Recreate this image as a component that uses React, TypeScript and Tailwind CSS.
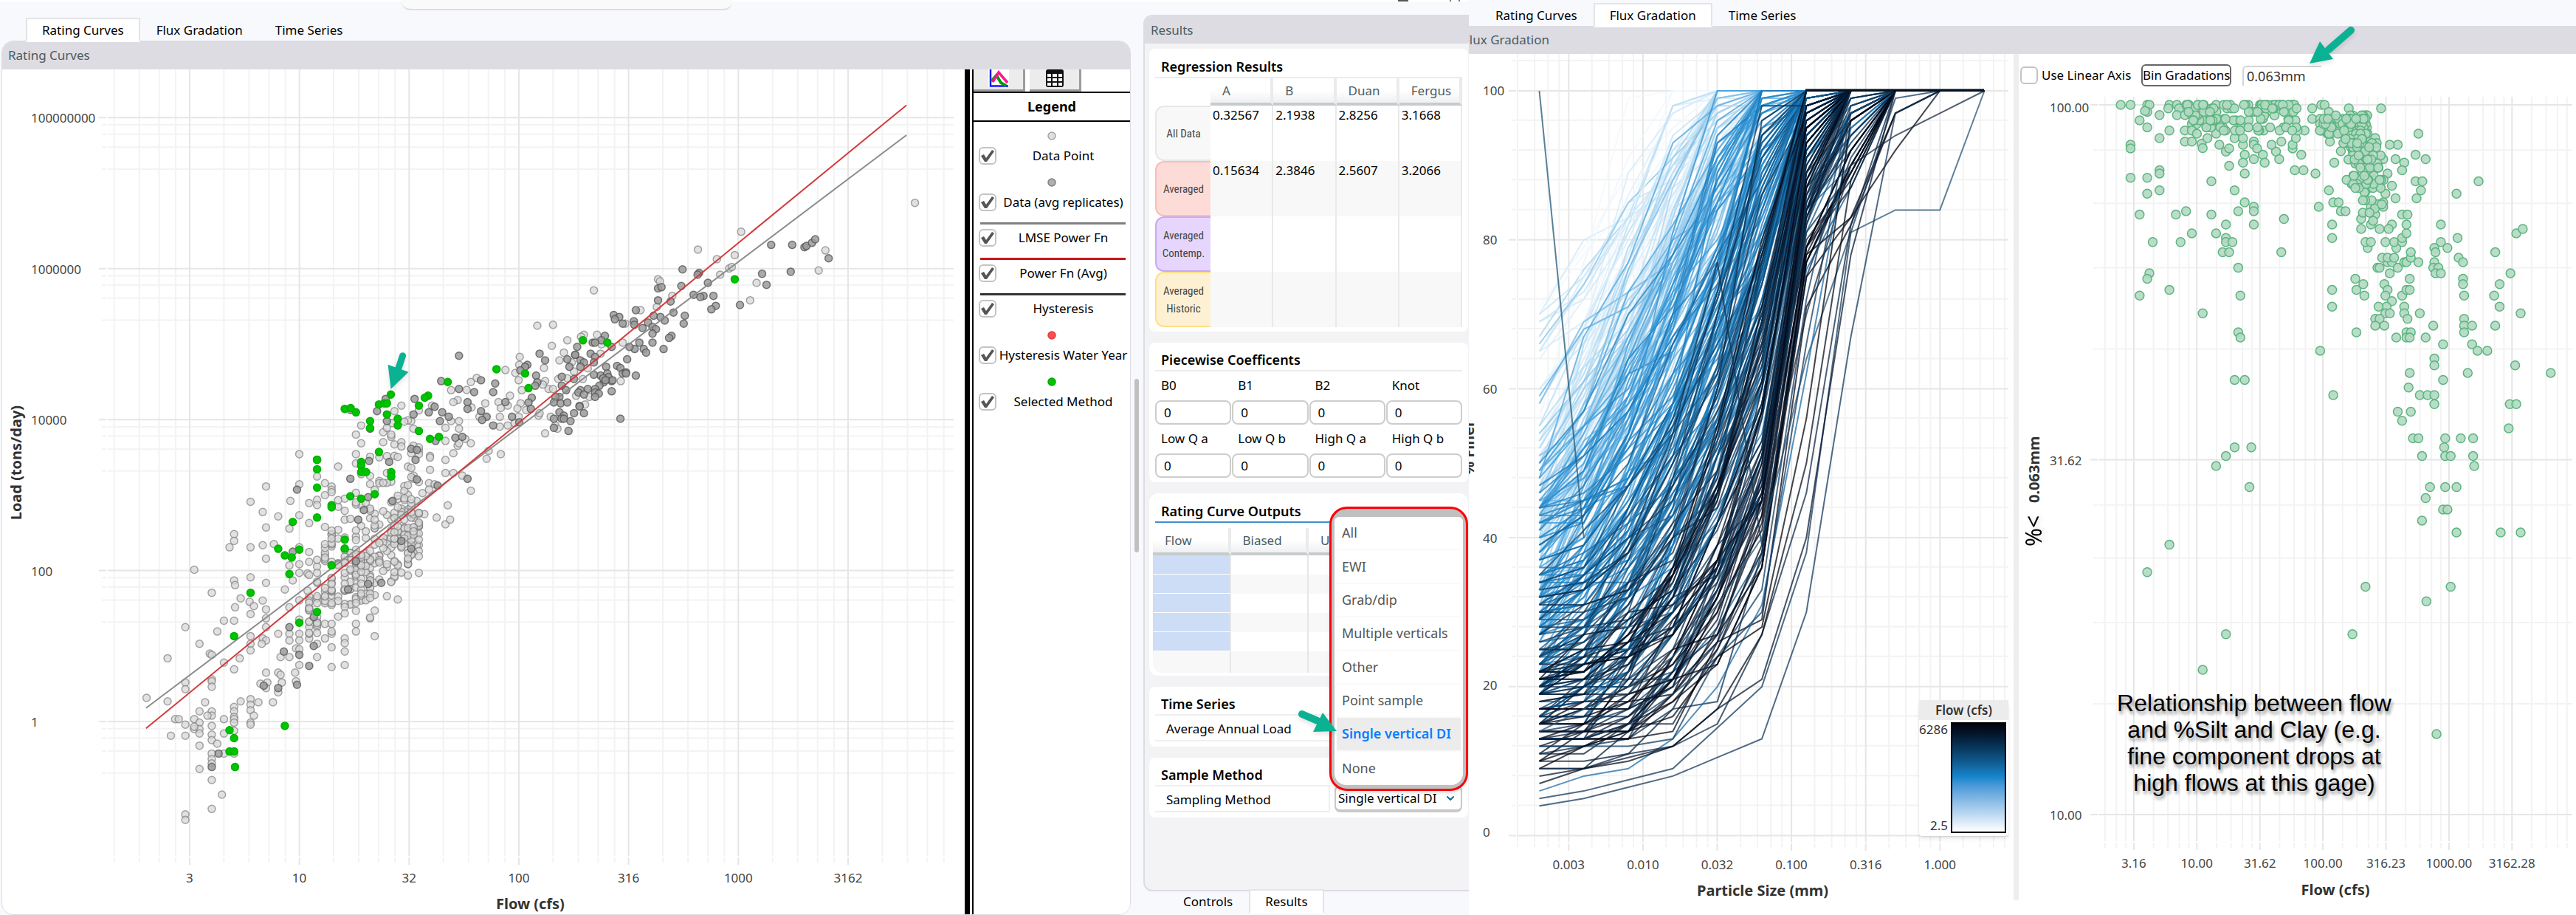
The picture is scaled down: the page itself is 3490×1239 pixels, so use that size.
import { useState } from 'react';
import clsx from 'clsx';
import { ChevronDown } from 'lucide-react';

type Point = { x: number; y: number };

// Digitised points are stored per tile as "x,y" pairs, with the tile's origin and scale.
function readTile(x0: number, y0: number, kx: number, ky: number, raw: string): Point[] {
  return raw
    .trim()
    .split(/\s+/)
    .map((pair) => {
      const [x, y] = pair.split(',').map(Number);
      return { x: x0 + x / kx, y: y0 + y / ky };
    });
}

function makeRandom(seed: number) {
  let s = seed;
  return () => {
    s = (s * 1664525 + 1013904223) % 4294967296;
    return s / 4294967296;
  };
}

const bell = (rnd: () => number) => rnd() + rnd() + rnd() - 1.5;

const loadTop = (raw: string) => readTile(0, 0, 2.24, 2.529, raw);
const loadRight = (raw: string) => readTile(700, 0, 2.529, 2.529, raw);
const loadLow = (raw: string) => readTile(0, 620, 2.24, 2.533, raw);
const siltTop = (raw: string) => readTile(2720, 0, 2.036, 2.529, raw);
const siltLow = (raw: string) => readTile(2720, 620, 2.036, 2.533, raw);

const selectedPoints = [
  ...loadTop(`1508,1265 1360,1309 1187,1352 1300,1356 1290,1363 1272,1390 1047,1401 1065,1398 1081,1413 1151,1386
    1167,1382 1175,1382 1175,1420 1124,1443 1124,1467 1208,1435 1208,1458 1272,1477 1306,1504 1333,1497 1151,1549 963,1575`),
  ...loadRight('228,1166 312,1174 30,1280 42,1330 749,957'),
  ...loadLow(`963,8 963,40 963,103 963,206 1097,15 1097,28 1097,50 1112,50 1188,50 1188,65 1064,133 1097,141 1138,126
    1007,163 1007,171 889,221 845,313 865,336 886,343 909,316 1047,282 1047,312 1007,370 879,400 761,464 963,530 909,567
    711,613 865,921 697,936 711,963 697,1009 711,1009 714,1062`),
];

const averagedPoints = [
  ...loadTop(`1394,1219 1340,1306 1461,1303 1504,1314 1394,1333 1440,1344 1498,1344 1420,1378 1420,1401 1535,1378
    1461,1409 1478,1428 1464,1439 1498,1458 1555,1428 1320,1394 1302,1413 1343,1413 1363,1428 1336,1443 1259,1367
    1256,1420 1171,1367 1145,1409 1175,1443 1065,1405 1124,1469 1323,1511 1383,1500 1404,1497 1249,1538 1266,1542`),
  ...loadRight(`874,839 946,839 988,847 995,843 1014,832 1025,820 1071,885 941,931 843,938 858,976 767,1045 684,1048
    669,1060 676,1014 642,1014 631,1018 608,1010 657,969 627,935 622,941 570,923 566,980 486,988 498,984 486,1029
    529,1033 539,1071 578,1082 574,1109 509,1098 494,1086 471,1082 452,1105 467,1120 479,1128 467,1143 433,1124
    403,1101 405,1113 410,1063 334,1079 353,1086 338,1094 365,1109 532,1151 524,1158 505,1196 467,1174 422,1174
    406,1196 437,1196 445,1208 388,1189 327,1189 304,1151 292,1166 262,1174 270,1174 209,1189 202,1216 255,1212
    270,1223 175,1231 220,1235 232,1242 220,1257 182,1257 266,1242 380,1231 346,1254 357,1261 365,1280 376,1276
    410,1287 308,1257 289,1287 312,1280 316,1292 327,1306 327,1341 266,1284 300,1310 285,1322 270,1333 270,1345
    283,1349 270,1360 245,1333 220,1337 213,1345 232,1352 198,1299 156,1291 156,1322 171,1337 148,1360 134,1360
    129,1379 152,1382 175,1379 217,1391 232,1416 198,1416 148,1413 163,1424 155,1435 163,1435 129,1435 186,1443
    129,1466 179,1477 357,1435 80,1212 99,1235 38,1250 30,1257 14,1269 68,1287 72,1310 65,1322 53,1363 42,1379
    50,1401 10,1447 376,1280 330,1303 298,1296 306,1303 217,1393 202,1216`),
  ...loadLow(`1121,12 1182,15 1262,8 1064,73 1266,75 1420,73 1329,96 902,110 1118,136 1192,149 1105,180 1088,213
    889,323 1081,356 1219,286 1249,313 1057,453 1118,434 1158,430 879,582 953,548 953,647 862,666 909,677 939,715
    801,783 845,791 902,780 664,1016 643,1062`),
];

function denseLoad(): Point[] {
  const rnd = makeRandom(41);
  const columns = [
    939, 963, 987, 1007, 1007, 1027, 1047, 1064, 1081, 1081, 1097, 1097, 1111, 1124, 1124, 1138, 1152, 1164, 1175, 1188,
    1198, 1208, 1219, 1228, 1239, 1249, 1256, 1272,
  ];
  const pairs: string[] = [];
  for (let i = 0; i < 235; i++) {
    const x = columns[Math.floor(rnd() * columns.length)];
    const y = 560 - (x - 909) * 0.92 + bell(rnd) * 150;
    pairs.push(`${x},${Math.round(y)}`);
  }
  for (let i = 0; i < 70; i++) {
    const x = columns[Math.floor(rnd() * columns.length)];
    pairs.push(`${x},${Math.round(300 - (x - 909) * 0.7 + bell(rnd) * 170)}`);
  }
  return loadLow(pairs.join(' '));
}

const dataPoints = [
  ...loadTop(`1535,1268 1565,1278 1448,1295 1430,1309 1370,1337 1417,1336 1390,1371 1377,1378 1474,1382 1549,1356
    1514,1378 1521,1398 1542,1390 1432,1396 1312,1390 1272,1406 1219,1390 1198,1409 1191,1450 1249,1443 1097,1458
    1081,1489 1097,1519 1164,1481 1175,1466 1164,1515 1198,1523 1219,1515 1219,1530 1256,1469 1394,1443 1370,1443
    1394,1469 1353,1466 1353,1511 1390,1527 1394,1519 1413,1504 1430,1519 1377,1553 1518,1428 1518,1462 1542,1458
    1456,1428 1563,1450 1521,1556 1484,1545 909,1556 1081,1556 1124,1565 1198,1562 1208,1566 1306,1562`),
  ...loadRight(`771,794 623,855 749,874 688,888 730,920 739,915 699,941 1060,858 1037,927 824,969 802,1029 1367,695
    486,957 493,964 535,1014 482,1052 426,1063 266,995 72,1116 126,1113 232,1147 222,1154 277,1147 175,1166 122,1185
    163,1208 12,1223 148,1235 289,1212 292,1180 365,1174 374,1109 10,1250 95,1261 8,1303 19,1337 99,1306 91,1318
    111,1333 126,1333 190,1242 198,1273 175,1296 228,1299 144,1299 245,1262 358,1306 15,1382 34,1405 8,1428 76,1424
    80,1416 118,1428 236,1386 205,1356 251,1360 134,1458 141,1469 99,1485 4,1400`),
  ...loadLow(`1306,0 1353,8 1478,4 1306,42 1353,53 1377,53 1404,62 1430,114 1239,31 1256,62 1256,73 1303,88 1320,92
    1283,122 1303,110 1266,149 1272,190 1289,194 1326,206 1353,229 1367,213 1360,164 1272,237 1266,263 1256,240
    1272,301 1266,301 1239,251 1228,240 1239,366 1208,366 1208,487 1175,476 1188,426 1198,411 1138,613 1047,621
    1047,666 1047,712 1007,719 1124,552 1138,525 1027,31 963,65 909,92 808,99 761,152 798,187 845,202 882,149 939,156
    963,145 987,129 987,88 1007,99 909,198 939,225 879,244 808,240 711,263 711,286 697,308 761,308 798,301 832,297
    808,347 590,385 711,422 714,438 761,411 808,430 865,453 889,422 643,464 731,483 758,495 798,491 771,510 714,514
    808,521 761,537 808,552 711,560 680,560 563,582 660,597 808,582 606,639 761,613 761,639 761,662 798,621 808,628
    795,639 845,605 879,605 879,628 879,685 852,685 909,605 909,628 909,712 899,655 909,658 963,685 963,639 987,621
    939,621 939,605 963,582 939,582 987,571 1007,571 1007,605 1081,571 1081,597 509,689 637,673 643,677 680,704
    711,727 728,689 808,738 845,738 852,746 896,738 899,768 856,772 812,772 791,776 808,791 845,806 563,772 563,795
    643,761 643,768 643,787 445,825 509,837 623,840 731,837 761,829 761,848 761,867 785,840 829,840 771,886 761,910
    761,917 711,856 711,871 711,890 711,898 711,910 680,898 643,871 643,886 630,886 606,871 590,898 606,910 532,898
    543,898 563,917 590,932 606,932 606,947 643,921 643,951 643,970 590,924 519,955 563,955 606,989 660,982 680,947
    711,938 680,1016 711,1016 643,1016 643,1035 643,1050 606,1069 643,1107 674,1157 643,1206 563,1225 563,1244
    879,370 909,366 939,358 963,374 909,396 934,398 939,324 987,335 987,355 1007,263 1027,248 1047,213 1047,183
    909,490 879,514 963,483 939,525 909,556 1007,305 909,308 939,403 963,396 963,430 939,477 934,457`),
  ...denseLoad(),
];

function denseSilt(): Point[] {
  const rnd = makeRandom(97);
  const pairs: string[] = [];
  // crowded band close to 100 %
  for (let i = 0; i < 110; i++) {
    const x = 490 + rnd() * 310;
    pairs.push(`${Math.round(x)},${[359, 359, 371, 383, 383, 395, 407, 412, 436, 447][Math.floor(rnd() * 10)]}`);
  }
  for (let i = 0; i < 75; i++) {
    const x = 860 + rnd() * 135;
    pairs.push(`${Math.round(x)},${[395, 407, 407, 424, 424, 436, 447, 458][Math.floor(rnd() * 8)]}`);
  }
  // drop between 200 and 400 cfs
  for (let i = 0; i < 120; i++) {
    const y = 480 + rnd() * rnd() * 340;
    const x = 965 + (y - 480) * 0.17 + bell(rnd) * 48;
    pairs.push(`${Math.round(x)},${Math.round(y / 14) * 14}`);
  }
  return siltTop(pairs.join(' '));
}

const siltPoints = [
  ...siltTop(`312,359 339,359 385,359 391,359 385,383 379,380 364,412 385,436 419,394 419,473 446,447 446,359 443,371
    467,359 473,371 467,394 489,394 508,394 508,424 522,424 489,447 508,447 522,458 489,485 508,485 535,492 538,507
    551,473 575,458 584,496 602,519 611,508 649,496 626,473 649,473 679,485 679,496 688,508 654,530 679,545 704,530
    709,557 649,557 611,568 654,594 740,519 749,545 755,485 728,496 786,508 786,496 795,473 810,530 792,583 816,583
    849,594 819,447 840,407 840,371 865,359 874,359 886,383 889,485 901,557 941,371 1030,371 1014,473 1133,458 1125,530
    1153,545 1076,496 1054,496 1070,545 1094,557 1125,621 1144,621 1140,652 1128,679 1299,621 1238,663 339,496 339,508
    419,583 419,594 385,609 339,609 419,652 385,663 562,621 626,652 654,693 679,708 679,723 636,723 562,735 492,723
    464,735 364,735 602,769 679,769 762,750 886,652 898,693 913,693 858,708 919,723 932,723 895,769 895,815 508,799
    575,799 602,815 602,829 620,829 593,864 611,864 400,829 477,829 755,864 636,917 391,936 385,955 446,993 364,1012
    642,1012 538,1073 636,1138 642,1156 862,1201 626,1301 654,1301 898,1353 626,1532 672,1532 602,1562 895,993 895,1050
    959,955 981,973 962,993 984,1012 962,1138 1054,936 1039,973 1048,993 1042,1012 1060,1031 1045,1050 1023,1050
    1042,1073 1054,1073 1014,1092 1026,1092 1039,1115 1014,1115 1088,1012 1100,993 1109,993 1109,955 1094,1050
    1094,1073 1103,1092 1137,1073 1100,1138 1112,1138 1072,1156 1100,1156 1109,1156 1153,1156 1174,1115 1020,917
    1026,917 1048,898 1060,898 1076,917 1033,883 1048,883 1066,883 1094,898 1100,898 1112,883 1112,864 1133,898
    1072,849 1066,829 1088,829 1088,815 1100,799 1100,769 1088,735 1103,735 1177,849 1195,829 1180,864 1213,849
    1177,898 1174,917 1188,917 1180,936 1195,936 1195,769 1241,815 1244,883 1256,898 1256,955 1256,973 1259,1012
    1259,1092 1259,1115 1259,1138 1281,1115 1281,1179 1296,1201 1323,1201 1201,1179 1177,1228 1177,1251 1109,1277
    1106,1327 1201,1301 1269,1277 1137,1353 1158,1353 1177,1353 1177,1384 1076,1410 1112,1410 1088,1441 1118,1501
    1133,1501 1207,1501 1250,1501 1284,1501 1204,1532 1143,1562 1207,1562 1222,1562 1284,1562 1345,864 1403,799
    1421,784 1387,936 1357,973 1342,1012 1357,1050 1415,1073 1345,1115 1400,1251 1498,1277 1385,1384 1403,1384 1382,1467
    993,849 987,829 1002,829 1002,769 975,784 975,750 1002,708 1036,693 1036,708 1014,735 1042,829 1060,769 1042,663
    1070,679 1060,636 1023,636 1088,583 1048,594 1036,545`),
  ...siltLow(`575,28 1287,28 667,100 1165,100 1207,100 1238,100 1153,138 1201,177 1213,177 1143,215 1238,256 1360,256
    1415,256 446,298 385,392 987,442 1222,442 1155,492 602,605 951,605 538,727 1183,947`),
  ...denseSilt(),
];

const rampStops: [number, number[]][] = [
  [0, [240, 248, 253]],
  [0.25, [160, 208, 238]],
  [0.45, [50, 150, 215]],
  [0.62, [22, 116, 180]],
  [0.78, [12, 66, 108]],
  [0.9, [8, 30, 56]],
  [1, [3, 6, 20]],
];

function ramp(t: number) {
  const v = Math.min(1, Math.max(0, t));
  let i = 1;
  while (i < rampStops.length - 1 && v > rampStops[i][0]) i++;
  const [a, ca] = rampStops[i - 1];
  const [b, cb] = rampStops[i];
  const f = (v - a) / (b - a);
  return `rgb(${ca.map((c, n) => Math.round(c + (cb[n] - c) * f)).join(',')})`;
}

const sizeX = (k: number) => 2085.5 + k * 60.3;
const finerY = (p: number) => 1131.6 - p * 10.086;

function curvePath(values: number[]) {
  return values.map((p, k) => `${k ? 'L' : 'M'}${sizeX(k).toFixed(1)} ${finerY(p).toFixed(1)}`).join('');
}

function buildCurves() {
  const rnd = makeRandom(7);
  const curves: { d: string; color: string }[] = [];
  const total = 330;
  for (let i = 0; i < total; i++) {
    const t = i / total;
    const start = (14 + 44 * Math.pow(1 - t, 1.1)) * (0.6 + rnd() * 0.75);
    const reach = 3.8 + 3.5 * t + bell(rnd) * 1.4;
    const power = 0.7 + 2 * t * t + rnd() * 0.6;
    const values: number[] = [];
    for (let k = 0; k <= 10; k++) {
      let p = start + (100 - start) * Math.pow(k / reach, power);
      if (k && k < reach) p += bell(rnd) * 4;
      // sand sizes close in on 100 % much faster than silt sizes
      if (k > 5 && k < reach) p = 100 - (100 - p) * 0.5;
      if (k >= reach) p = k < 7 && rnd() < 0.25 ? 97 + Math.floor(rnd() * 3) : 100;
      values.push(Math.min(100, Math.round(Math.max(p, values[k - 1] ?? 0))));
    }
    curves.push({ d: curvePath(values), color: ramp(t + bell(rnd) * 0.16) });
  }
  return curves;
}

const curves = [
  ...buildCurves(),
  { d: curvePath([100, 40]), color: '#225577' },
  { d: curvePath([24, 30, 39, 54, 77, 39, 85, 100, 100, 100, 100]), color: '#123450' },
  { d: curvePath([14, 17, 20, 24, 31, 40, 64, 81, 84, 84, 100]), color: '#2a5676' },
  { d: curvePath([16, 18, 19, 25, 33, 44, 70, 90, 94, 97, 100]), color: '#1a2a40' },
  { d: curvePath([4, 5, 6.5, 8, 10.5, 13, 30, 67, 97, 100, 100]), color: '#173a5c' },
  { d: curvePath([5, 6, 7.5, 9, 14.5, 20, 38, 81, 99, 100, 100]), color: '#173a5c' },
  { d: curvePath([6, 8, 9, 13, 20, 31, 62, 95, 100, 100, 100]), color: '#1c6ca8' },
  { d: curvePath([8, 9, 10.5, 12, 17, 21, 40, 78, 100, 100, 100]), color: '#0a1a33' },
  { d: curvePath([9, 9, 11, 12, 15, 27, 46, 82, 100, 100, 100]), color: '#102a48' },
  { d: curvePath([7, 9, 10, 12, 17, 27, 50, 88, 100, 100, 100]), color: '#06101f' },
  { d: curvePath([12, 12, 12, 13, 24, 33, 72, 98, 100, 100, 100]), color: '#143c60' },
  { d: curvePath([13, 13, 15, 19, 24, 30, 66, 97, 100, 100, 100]), color: '#143c60' },
  { d: curvePath([10, 12, 14, 16, 24, 28, 56, 96, 100, 100, 100]), color: '#05070f' },
];

// Five linear divisions between two majors, seen on a log axis.
const logSteps = (ratio: number) => [1, 2, 3, 4].map((k) => Math.log(1 + ((ratio - 1) * k) / 5) / Math.log(ratio));
const halfDecade = logSteps(Math.sqrt(10));
const twoDecades = logSteps(100);

function series(first: number, step: number, count: number) {
  return Array.from({ length: count }, (_, i) => first + step * i);
}

function minors(majors: number[], step: number, fractions: number[], low: number, high: number) {
  const all = [majors[0] - step, ...majors].flatMap((m) => fractions.map((f) => m + step * f));
  return all.filter((v) => v >= Math.min(low, high) && v <= Math.max(low, high));
}

type GridProps = {
  left: number;
  right: number;
  top: number;
  bottom: number;
  xMajor: number[];
  xMinor: number[];
  yMajor: number[];
  yMinor: number[];
};

function Grid({ left, right, top, bottom, xMajor, xMinor, yMajor, yMinor }: GridProps) {
  const vertical = (x: number, tick: number) => `M${x} ${top}V${bottom}M${x} ${bottom + 2}v${tick}`;
  const horizontal = (y: number, tick: number) => `M${left} ${y}H${right}M${left - 2} ${y}h${-tick}`;
  return (
    <g fill="none" strokeWidth="2">
      <path stroke="#f3f3f3" d={[...xMinor.map((x) => vertical(x, 7)), ...yMinor.map((y) => horizontal(y, 6))].join('')} />
      <path stroke="#e6e6e6" d={[...xMajor.map((x) => vertical(x, 10)), ...yMajor.map((y) => horizontal(y, 10))].join('')} />
    </g>
  );
}

function Dots({ points, r, fill, stroke }: { points: Point[]; r: number; fill: string; stroke: string }) {
  return (
    <g fill={fill} stroke={stroke} strokeWidth="1.5">
      {points.map((p, i) => (
        <circle key={i} cx={p.x.toFixed(1)} cy={p.y.toFixed(1)} r={r} />
      ))}
    </g>
  );
}

const tick = 'fill-[#444] text-[17px]';
const axisTitle = 'fill-[#333] text-[20px] font-bold';

function LoadChart() {
  const xMajor = series(257.1, 148.8, 7);
  const yMajor = series(159.3, 204.6, 5);
  const yLabels = ['100000000', '1000000', '10000', '100', '1'];
  const xLabels = ['3', '10', '32', '100', '316', '1000', '3162'];
  const xMinor = minors(xMajor, 148.8, halfDecade, 147, 1290);
  const yMinor = [...yMajor, 1182.3].slice(1).flatMap((m) => twoDecades.map((f) => m - 204.6 * f)).filter((y) => y < 1060);
  return (
    <svg viewBox="3 94 1305 1145" className="block h-auto min-w-0 flex-1" role="img" aria-label="Load against flow">
      <Grid left={146} right={1293} top={94} bottom={1160} xMajor={xMajor} xMinor={xMinor} yMajor={yMajor} yMinor={yMinor} />
      <Dots points={dataPoints} r={5} fill="rgba(215,215,215,0.75)" stroke="rgba(120,120,120,0.65)" />
      <Dots points={averagedPoints} r={5} fill="rgba(155,155,155,0.85)" stroke="rgba(80,80,80,0.75)" />
      <g strokeWidth="2">
        <path d="M198 959.5L1229 183" stroke="#8c8c8c" />
        <path d="M198 987L1229 142.5" stroke="#d3393b" />
      </g>
      <Dots points={selectedPoints} r={5} fill="#00c400" stroke="#00b000" />
      {yLabels.map((label, i) => (
        <text key={label} x={42} y={yMajor[i] + 7} className={tick}>
          {label}
        </text>
      ))}
      {xLabels.map((label, i) => (
        <text key={label} x={xMajor[i]} y={1196} textAnchor="middle" className={tick}>
          {label}
        </text>
      ))}
      <text x={719} y={1232} textAnchor="middle" className={axisTitle}>
        Flow (cfs)
      </text>
      <text transform="translate(29 627) rotate(-90)" textAnchor="middle" className={axisTitle}>
        Load (tons/day)
      </text>
      <g fill="#0bb193" stroke="#0bb193" className="drop-shadow-md">
        <path d="M546 482L539 503" strokeWidth="9" strokeLinecap="round" />
        <path d="M526 494L554 504L530 527Z" stroke="none" />
      </g>
    </svg>
  );
}

function GradationChart() {
  const xMajor = series(2125.3, 100.6, 6);
  const yMajor = series(123, 201.7, 6);
  const yMinor = series(82, 40.34, 26).filter((_, i) => i % 5 !== 1);
  const xLabels = ['0.003', '0.010', '0.032', '0.100', '0.316', '1.000'];
  return (
    <svg viewBox="1990 73 738 1146" className="block h-auto w-full" role="img" aria-label="Percent finer by particle size">
      <Grid
        left={2056}
        right={2721}
        top={73}
        bottom={1140}
        xMajor={xMajor}
        xMinor={minors(xMajor, 100.6, halfDecade, 2056, 2720)}
        yMajor={yMajor}
        yMinor={yMinor}
      />
      <g fill="none" strokeWidth="2" strokeOpacity="0.75">
        {curves.map((c, i) => (
          <path key={i} d={c.d} stroke={c.color} />
        ))}
      </g>
      <path d="M2446 122H2688" stroke="#04101f" strokeWidth="3" />
      {['100', '80', '60', '40', '20', '0'].map((label, i) => (
        <text key={label} x={2009} y={[129, 331, 533, 735, 934, 1133][i]} className={tick}>
          {label}
        </text>
      ))}
      {xLabels.map((label, i) => (
        <text key={label} x={xMajor[i]} y={1177} textAnchor="middle" className={tick}>
          {label}
        </text>
      ))}
      <text x={2388} y={1213} textAnchor="middle" className={axisTitle}>
        Particle Size (mm)
      </text>
      <text transform="translate(1997 606) rotate(-90)" textAnchor="middle" className={axisTitle}>
        % Finer
      </text>
    </svg>
  );
}

function SiltChart() {
  const xMajor = series(2890.9, 85.4, 7);
  const yMajor = series(142, 480.5, 3);
  const yMinor = yMajor.slice(1).flatMap((m) => halfDecade.map((f) => m - 480.5 * f));
  const xLabels = ['3.16', '10.00', '31.62', '100.00', '316.23', '1000.00', '3162.28'];
  return (
    <svg viewBox="2735 131 755 1108" className="block h-auto w-full" role="img" aria-label="Percent silt and clay by flow">
      <Grid
        left={2844}
        right={3485}
        top={131}
        bottom={1139}
        xMajor={xMajor}
        xMinor={minors(xMajor, 85.4, halfDecade, 2846, 3482)}
        yMajor={yMajor}
        yMinor={yMinor}
      />
      <Dots points={siltPoints} r={6} fill="rgba(178,217,194,0.9)" stroke="#5db481" />
      {['100.00', '31.62', '10.00'].map((label, i) => (
        <text key={label} x={2777} y={[152, 630, 1110][i]} className={tick}>
          {label}
        </text>
      ))}
      {xLabels.map((label, i) => (
        <text key={label} x={xMajor[i]} y={1175} textAnchor="middle" className={tick}>
          {label}
        </text>
      ))}
      <text x={3164} y={1212} textAnchor="middle" className={axisTitle}>
        Flow (cfs)
      </text>
      <text transform="translate(2763 681) rotate(-90)" className={axisTitle}>
        0.063mm
      </text>
      <text transform="translate(2766 740) rotate(-90)" className="fill-black text-[30px] drop-shadow-md">
        %&lt;
      </text>
    </svg>
  );
}

function Tabs({ items, active, className }: { items: string[]; active: string; className?: string }) {
  return (
    <div role="tablist" className={clsx('flex text-[17px] text-black', className)}>
      {items.map((item) => (
        <button
          key={item}
          type="button"
          role="tab"
          aria-selected={item === active}
          className={clsx('border-2 px-5', item === active ? 'border-[#e3e4e8] border-b-white bg-white' : 'border-transparent')}
        >
          {item}
        </button>
      ))}
    </div>
  );
}

function CheckBox({ id, defaultChecked }: { id: string; defaultChecked?: boolean }) {
  return (
    <span className="relative block size-6 shrink-0">
      <input
        id={id}
        type="checkbox"
        defaultChecked={defaultChecked}
        className="peer block size-6 appearance-none rounded-md border-2 border-[#c4c4c4] bg-white"
      />
      <svg viewBox="0 0 24 24" className="pointer-events-none absolute inset-0 hidden peer-checked:block">
        <path d="M3 12L7 10L10 15L18 4L21 6L11 20H8Z" fill="#555" />
      </svg>
    </span>
  );
}

const legend = [
  { label: 'Data Point', kind: 'dot', color: '#dedede', ring: '#a3a3a3' },
  { label: 'Data (avg replicates)', kind: 'dot', color: '#b0b0b0', ring: '#808080' },
  { label: 'LMSE Power Fn', kind: 'line', color: '#808080' },
  { label: 'Power Fn (Avg)', kind: 'line', color: '#c8161d' },
  { label: 'Hysteresis', kind: 'line', color: '#333333' },
  { label: 'Hysteresis Water Year', kind: 'dot', color: '#ff4d4d', ring: '#e03c3c' },
  { label: 'Selected Method', kind: 'dot', color: '#00c400', ring: '#00a800' },
];

function Legend() {
  return (
    <aside className="flex w-[224px] shrink-0 border-l-[7px] border-black bg-white pl-[3px] text-black">
      <div className="min-w-0 flex-1 border-l-2 border-black">
        <div className="flex gap-[6px] border-b-2 border-black">
          <button
            type="button"
            aria-label="Chart"
            className="flex h-[30px] w-[70px] items-start justify-center border-r-[3px] border-b-[3px] border-[#9b9b9b] bg-[#ececec]"
          >
            <svg viewBox="0 0 28 24" className="h-6 w-7">
              <rect width="28" height="24" fill="#fff" />
              <path d="M3 0V22.5H27" fill="none" stroke="#1414ff" strokeWidth="2.5" />
              <path d="M4 16L11 8L17 18L24 22" fill="none" stroke="#0a9a0a" strokeWidth="4" />
              <path d="M6 17L14 4L26 18" fill="none" stroke="#ff1493" strokeWidth="3.5" />
            </svg>
          </button>
          <button
            type="button"
            aria-label="Table"
            className="flex h-[30px] w-[70px] items-start justify-center border-r-[3px] border-b-[3px] border-[#9b9b9b] bg-[#ececec]"
          >
            <svg viewBox="0 0 26 25" className="h-[25px] w-[26px]">
              <rect x="1" y="0" width="24" height="24" rx="3" fill="#111" />
              <path
                d="M3 6h5v4H3zM10 6h6v4h-6zM18 6h5v4h-5zM3 12h5v4H3zM10 12h6v4h-6zM18 12h5v4h-5zM3 18h5v4H3zM10 18h6v4h-6zM18 18h5v4h-5z"
                fill="#fff"
              />
            </svg>
          </button>
        </div>
        <h2 className="flex h-[39px] items-center justify-center border-b-2 border-black text-[18px] font-bold">Legend</h2>
        <ul className="text-[17px]">
          {legend.map((item) => {
            const id = item.label.toLowerCase().replace(/[^a-z]+/g, '-');
            return (
              <li key={item.label} className={clsx('flex flex-col', item.kind === 'dot' ? 'h-[63px]' : 'h-12')}>
                {item.kind === 'dot' ? (
                  <svg viewBox="0 0 12 34" className="mx-auto block h-[34px] w-3 shrink-0">
                    <circle cx="6" cy="19" r="5" fill={item.color} stroke={item.ring} strokeWidth="1.5" />
                  </svg>
                ) : (
                  <span className="mt-[10px] mr-[6px] mb-[6px] ml-[9px] block h-[3px] shrink-0" style={{ background: item.color }} />
                )}
                <div className="flex h-6 items-center pl-[7px]">
                  <CheckBox id={id} defaultChecked />
                  <label htmlFor={id} className="flex-1 text-center whitespace-nowrap">
                    {item.label}
                  </label>
                </div>
              </li>
            );
          })}
        </ul>
      </div>
    </aside>
  );
}

const cardTitle = 'ml-2 text-[18px] leading-6 font-semibold text-black';
const headCell =
  'border-r-4 border-b-4 border-r-[#e9ebec] border-b-[#c6cbcb] bg-linear-to-b from-white via-white to-[#eef0f2] text-left text-[17px] font-normal text-[#4b5b61]';

const regressionRows = [
  { label: 'All Data', tint: 'border-[#e8e8e8] bg-[#f8f8f8]', cells: ['0.32567', '2.1938', '2.8256', '3.1668'] },
  { label: 'Averaged', tint: 'border-[#fbbdb8] bg-[#fddcd8]', cells: ['0.15634', '2.3846', '2.5607', '3.2066'] },
  { label: 'Averaged Contemp.', tint: 'border-[#c9a8f5] bg-[#e6d6fd]', cells: ['', '', '', ''] },
  { label: 'Averaged Historic', tint: 'border-[#ffdf8a] bg-[#fef1d3]', cells: ['', '', '', ''] },
];

function RegressionCard() {
  return (
    <section className="h-[383px] rounded-lg bg-white px-2 pt-3">
      <h3 className={cardTitle}>Regression Results</h3>
      <table className="mt-[2px] w-full table-fixed border-separate border-spacing-0 border-t-2 border-[#ececec] text-[17px] text-black">
        <thead>
          <tr className="h-[37px]">
            <td className="w-[75px]" />
            {['A', 'B', 'Duan', 'Fergus'].map((h) => (
              <th key={h} scope="col" className={clsx(headCell, 'pl-4')}>
                {h}
              </th>
            ))}
          </tr>
        </thead>
        <tbody>
          {regressionRows.map((row, i) => (
            <tr key={row.label} className="h-[75px]">
              <th
                scope="row"
                className={clsx(
                  "rounded-l-xl border-2 border-r-0 px-1 font-['Liberation_Sans_Narrow','Roboto_Condensed',Roboto,sans-serif] text-[15px] leading-6 font-normal text-[#444]",
                  row.tint,
                )}
              >
                {row.label}
              </th>
              {row.cells.map((cell, n) => (
                <td key={n} className={clsx('border-r-2 border-[#e9e9e9] pl-[3px] align-top', i % 2 && 'bg-[#f8f8f8]')}>
                  {cell}
                </td>
              ))}
            </tr>
          ))}
        </tbody>
      </table>
    </section>
  );
}

function PiecewiseCard() {
  return (
    <section className="h-[189px] rounded-lg bg-white px-2 pt-[11px]">
      <h3 className={cardTitle}>Piecewise Coefficents</h3>
      <div className="mt-[2px] grid grid-cols-4 gap-x-[1px] border-t-2 border-[#ececec] pt-[3px]">
        {['B0', 'B1', 'B2', 'Knot', 'Low Q a', 'Low Q b', 'High Q a', 'High Q b'].map((name) => (
          <label key={name} className="block h-[72px] text-[17px] leading-8 text-black">
            <span className="block h-9 pl-2">{name}</span>
            <input defaultValue="0" className="block h-[33px] w-full rounded-lg border-2 border-[#cdcdcd] bg-white px-[10px]" />
          </label>
        ))}
      </div>
    </section>
  );
}

function OutputsCard() {
  return (
    <section className="h-[247px] rounded-xl bg-white px-[5px] pt-3">
      <h3 className="mx-[3px] border-b-2 border-[#3d8fd1] pb-[2px] pl-2 text-[18px] leading-6 font-semibold text-black">Rating Curve Outputs</h3>
      <table className="mt-[7px] w-full table-fixed border-separate border-spacing-0 overflow-hidden rounded-b-xl">
        <thead>
          <tr className="h-[37px]">
            {['Flow', 'Biased', 'Unbiased', ''].map((h) => (
              <th key={h} scope="col" className={clsx(headCell, 'pl-4')}>
                {h}
              </th>
            ))}
          </tr>
        </thead>
        <tbody>
          {[0, 1, 2, 3, 4, 5].map((row) => (
            <tr key={row} className={clsx(row === 5 ? 'h-[29px]' : 'h-[26px]', row % 2 && 'bg-[#f8f8f8]')}>
              <td className={clsx('border-r-2 border-[#e6e6e6]', row < 5 && 'border-b border-b-white bg-[#ccddf5]')} />
              <td className="border-r-2 border-[#e6e6e6]" />
              <td className="border-r-2 border-[#e6e6e6]" />
              <td />
            </tr>
          ))}
        </tbody>
      </table>
    </section>
  );
}

const methods = ['All', 'EWI', 'Grab/dip', 'Multiple verticals', 'Other', 'Point sample', 'Single vertical DI', 'None'];

function MethodMenu({ value, onPick }: { value: string; onPick: (m: string) => void }) {
  return (
    <div className="absolute -right-2 bottom-[29px] -left-[7px] z-10 rounded-[24px] border-[3px] border-[#fb0007] bg-[#c0c0c0] px-1 pt-[11px] pb-[5px] shadow-md">
      <ul
        role="listbox"
        aria-label="Sampling Method"
        className="grid h-[363px] auto-rows-fr rounded-md rounded-b-2xl bg-white px-[3px]"
      >
        {methods.map((m) => (
          <li
            key={m}
            role="option"
            aria-selected={m === value}
            onClick={() => onPick(m)}
            className={clsx(
              'flex items-center pl-[7px] text-[18px] whitespace-nowrap',
              m === value ? 'bg-[#ececec] font-semibold text-[#0a7cff]' : 'text-[#555]',
              m !== 'None' && 'border-b-2 border-[#fafafa]',
            )}
          >
            {m}
          </li>
        ))}
      </ul>
    </div>
  );
}

function ResultsPanel() {
  const [method, setMethod] = useState('Single vertical DI');
  return (
    <div className="flex w-[441px] shrink-0 flex-col pt-5">
      <section className="flex h-[1187px] flex-col overflow-hidden rounded-tl-xl rounded-bl-xl border-2 border-r-0 border-[#dcdce2] bg-[#f3f3f5]">
        <h2 className="flex h-[37px] items-center bg-[#dddce2] pl-2 text-[17px] text-[#4b5b61]">Results</h2>
        <div className="flex flex-col gap-[15px] py-[7px] pr-[1px] pl-[6px]">
          <RegressionCard />
          <PiecewiseCard />
          <OutputsCard />
          <section className="h-[81px] rounded-lg bg-white px-2 pt-[11px]">
            <h3 className={cardTitle}>Time Series</h3>
            <p className="mt-[2px] h-[37px] border-y-2 border-[#efefef] pl-[15px] text-[17px] leading-9 text-black">Average Annual Load</p>
          </section>
          <section className="h-[81px] rounded-lg bg-white px-2 pt-[11px]">
            <h3 className={cardTitle}>Sample Method</h3>
            <div className="mt-[2px] flex h-[37px] gap-[6px] text-[17px] text-black">
              <label htmlFor="method" className="min-w-0 flex-1 border-y-2 border-r-2 border-[#efefef] pl-[15px] leading-9">
                Sampling Method
              </label>
              <div className="relative w-[173px]">
                <select
                  id="method"
                  value={method}
                  onChange={(e) => setMethod(e.target.value)}
                  className="block h-[37px] w-full appearance-none rounded-lg border-2 border-b-4 border-[#c9c9c9] bg-white pl-[3px]"
                >
                  {methods.map((m) => (
                    <option key={m}>{m}</option>
                  ))}
                </select>
                <ChevronDown className="pointer-events-none absolute top-[10px] right-2 size-4 text-[#1469a0]" strokeWidth={3} />
                <div className="absolute inset-x-0 bottom-0">
                  <MethodMenu value={method} onPick={setMethod} />
                </div>
                <svg viewBox="0 0 52 34" className="absolute -top-[104px] -left-[49px] z-20 h-[34px] w-[52px] overflow-visible drop-shadow-md">
                  <path d="M5 8L26 17" stroke="#0bb193" strokeWidth="10" strokeLinecap="round" />
                  <path d="M33 6L20 32L52 31Z" fill="#0bb193" />
                </svg>
              </div>
            </div>
          </section>
        </div>
      </section>
      <Tabs items={['Controls', 'Results']} active="Results" className="-mt-[3px] ml-8 h-[33px]" />
    </div>
  );
}

function FlowScale() {
  return (
    <div className="absolute right-[7px] bottom-[87px] w-[121px] rounded-sm bg-white pb-1 text-[17px] text-[#333] shadow-md">
      <p className="h-[27px] bg-[#ececec] text-center leading-7 font-semibold">Flow (cfs)</p>
      <div className="mt-[3px] flex h-[150px] pr-[3px]">
        <div className="flex w-[43px] flex-col justify-between pr-1 text-right leading-5">
          <span>6286</span>
          <span>2.5</span>
        </div>
        <div className="flex-1 border-2 border-black bg-linear-to-b from-[#01040f] via-[#1787cf] to-white" />
      </div>
    </div>
  );
}

function RightWindow() {
  return (
    <div className="relative flex min-w-0 flex-[1500] flex-col overflow-hidden bg-white">
      <div className="h-[35px] bg-[#f8f9fd] pt-1 pl-[14px]">
        <Tabs items={['Rating Curves', 'Flux Gradation', 'Time Series']} active="Flux Gradation" className="relative z-10 h-[33px]" />
      </div>
      <h2 className="flex h-[38px] items-center overflow-hidden bg-[#dddce2] text-[17px] text-[#4b5b61]">
        <span className="-ml-2">Flux Gradation</span>
      </h2>
      <div className="flex items-start">
        <div className="relative min-w-0 flex-[738]">
          <GradationChart />
          <FlowScale />
        </div>
        <div className="h-[1146px] w-[7px] shrink-0 bg-[#eeeeef]" />
        <div className="relative min-w-0 flex-[755]">
          <div className="flex h-[58px] items-center pl-[2px] text-[17px] whitespace-nowrap text-black">
            <CheckBox id="linear" />
            <label htmlFor="linear" className="w-[140px] pl-[5px]">
              Use Linear Axis
            </label>
            <button type="button" className="h-[30px] w-[122px] rounded-md border-2 border-[#666] text-center leading-6">
              Bin Gradations
            </button>
            <input
              aria-label="Grain size"
              defaultValue="0.063mm"
              className="ml-[15px] h-[27px] w-[107px] rounded-tl-md border-t-2 border-l-2 border-[#d4d4d4] bg-white pl-1 text-[18px] text-[#333]"
            />
          </div>
          <SiltChart />
          <p className="absolute top-[861px] left-[129px] w-[380px] text-center font-['Liberation_Sans',Arial,sans-serif] text-[32px] leading-9 text-black text-shadow-[2px_4px_4px_rgb(0_0_0/0.45)]">
            Relationship between flow and %Silt and Clay (e.g. fine component drops at high flows at this gage)
          </p>
          <svg viewBox="0 0 70 56" className="absolute -top-[39px] left-[392px] z-10 h-14 w-[70px] overflow-visible drop-shadow-md">
            <path d="M58 7L28 33" stroke="#0bb193" strokeWidth="10" strokeLinecap="round" />
            <path d="M16 22L34 46L2 52Z" fill="#0bb193" />
          </svg>
        </div>
      </div>
    </div>
  );
}

export default function App() {
  return (
    <main className="flex min-h-screen overflow-hidden bg-white font-['Noto_Sans','Open_Sans',sans-serif]">
      <div className="relative flex min-w-0 flex-[1990] border-t-2 border-white bg-[#f8f9fd]">
        <div className="-mt-[2px] flex min-w-0 flex-1 flex-col">
          <div className="h-[55px] pt-6 pl-[35px]">
            <Tabs items={['Rating Curves', 'Flux Gradation', 'Time Series']} active="Rating Curves" className="relative z-10 h-[33px]" />
          </div>
          <section className="ml-[2px] overflow-hidden rounded-2xl border border-[#dcdce2] bg-white">
            <h2 className="flex h-[38px] items-center bg-[#dddce2] pl-2 text-[17px] text-[#4b5b61]">Rating Curves</h2>
            <div className="flex">
              <LoadChart />
              <Legend />
            </div>
          </section>
        </div>
        <div className="-mt-[2px] w-[17px] shrink-0 px-[5px] pt-[513px]">
          <div className="h-[235px] w-[6px] rounded-full bg-[#c0c0c0]" />
        </div>
        <div className="-mt-[2px]">
          <ResultsPanel />
        </div>
        <div className="absolute -top-[2px] left-[544px] h-[14px] w-[448px] rounded-b-xl border-b-2 border-[#dedede] bg-[#fafafa]" />
        <div className="absolute -top-[2px] right-[12px] flex gap-14">
          <span className="h-[2px] w-[14px] bg-[#555]" />
          <span className="h-[2px] w-[14px] border-x-2 border-[#777]" />
        </div>
      </div>
      <RightWindow />
    </main>
  );
}
